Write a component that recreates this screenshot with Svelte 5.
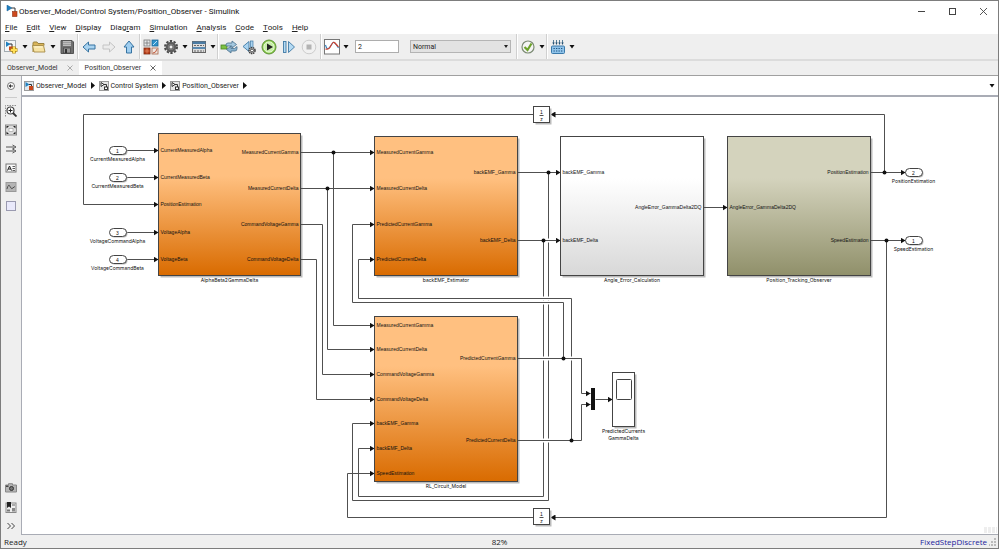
<script lang="ts">
  type Port = { y: number; name: string };
  type Block = {
    name: string;
    x: number;
    y: number;
    w: number;
    h: number;
    fill: string;
    inputs: Port[];
    outputs: Port[];
  };

  const menus = [
    ["", "F", "ile"],
    ["", "E", "dit"],
    ["", "V", "iew"],
    ["", "D", "isplay"],
    ["Diag", "r", "am"],
    ["", "S", "imulation"],
    ["", "A", "nalysis"],
    ["", "C", "ode"],
    ["", "T", "ools"],
    ["", "H", "elp"],
  ];

  const tabs = ["Observer_Model", "Position_Observer"];
  const crumbs = ["Observer_Model", "Control System", "Position_Observer"];
  const modes = ["Normal", "Accelerator", "Rapid Accelerator", "External"];

  let activeTab = $state("Position_Observer");
  let stopTime = $state("2");
  let mode = $state("Normal");

  const blocks: Block[] = [
    {
      name: "AlphaBeta2GammaDelta",
      x: 158,
      y: 133,
      w: 142,
      h: 142,
      fill: "orange",
      inputs: [
        { y: 150, name: "CurrentMeasuredAlpha" },
        { y: 177, name: "CurrentMeasuredBeta" },
        { y: 204, name: "PositionEstimation" },
        { y: 232, name: "VoltageAlpha" },
        { y: 259, name: "VoltageBeta" },
      ],
      outputs: [
        { y: 152, name: "MeasuredCurrentGamma" },
        { y: 188, name: "MeasuredCurrentDelta" },
        { y: 224, name: "CommandVoltageGamma" },
        { y: 259, name: "CommandVoltageDelta" },
      ],
    },
    {
      name: "backEMF_Estimator",
      x: 374,
      y: 136,
      w: 143,
      h: 139,
      fill: "orange",
      inputs: [
        { y: 152, name: "MeasuredCurrentGamma" },
        { y: 188, name: "MeasuredCurrentDelta" },
        { y: 224, name: "PredictedCurrentGamma" },
        { y: 259, name: "PredictedCurrentDelta" },
      ],
      outputs: [
        { y: 172, name: "backEMF_Gamma" },
        { y: 240, name: "backEMF_Delta" },
      ],
    },
    {
      name: "Angle_Error_Calculation",
      x: 560,
      y: 136,
      w: 143,
      h: 139,
      fill: "white",
      inputs: [
        { y: 172, name: "backEMF_Gamma" },
        { y: 240, name: "backEMF_Delta" },
      ],
      outputs: [{ y: 207, name: "AngleError_GammaDelta2DQ" }],
    },
    {
      name: "Position_Tracking_Observer",
      x: 727,
      y: 136,
      w: 143,
      h: 139,
      fill: "olive",
      inputs: [{ y: 207, name: "AngleError_GammaDelta2DQ" }],
      outputs: [
        { y: 172, name: "PositionEstimation" },
        { y: 240, name: "SpeedEstimation" },
      ],
    },
    {
      name: "RL_Circuit_Model",
      x: 374,
      y: 316,
      w: 143,
      h: 165,
      fill: "orange",
      inputs: [
        { y: 325, name: "MeasuredCurrentGamma" },
        { y: 349, name: "MeasuredCurrentDelta" },
        { y: 374, name: "CommandVoltageGamma" },
        { y: 399, name: "CommandVoltageDelta" },
        { y: 423, name: "backEMF_Gamma" },
        { y: 448, name: "backEMF_Delta" },
        { y: 473, name: "SpeedEstimation" },
      ],
      outputs: [
        { y: 358, name: "PredictedCurrentGamma" },
        { y: 440, name: "PredictedCurrentDelta" },
      ],
    },
  ];

  const terminals = [
    { id: 1, x: 117, y: 150, name: "CurrentMeasuredAlpha" },
    { id: 2, x: 117, y: 177, name: "CurrentMeasuredBeta" },
    { id: 3, x: 117, y: 232, name: "VoltageCommandAlpha" },
    { id: 4, x: 117, y: 259, name: "VoltageCommandBeta" },
    { id: 2, x: 913, y: 172, name: "PositionEstimation" },
    { id: 1, x: 913, y: 240, name: "SpeedEstimation" },
  ];

  const delays = [
    { x: 533, y: 106 },
    { x: 533, y: 508 },
  ];

  const wires = [
    "M126 150H158",
    "M126 177H158",
    "M126 232H158",
    "M126 259H158",
    "M333 152V325H374",
    "M327 188V349H374",
    "M300 152H374",
    "M300 188H374",
    "M300 224H322V374H374",
    "M300 259H316V399H374",
    "M548 172V500H352V423H374",
    "M543 240V496H358V448H374",
    "M517 172H560",
    "M517 240H560",
    "M703 207H727",
    "M870 172H905",
    "M870 240H905",
    "M884 172V114H550",
    "M886 240V517H550",
    "M347 517V473H374",
    "M533 114H83V204H158",
  ];
  const predicted = [
    "M563 358V302H352V224H374",
    "M571 440V298H358V259H374",
    "M517 358H581V393H590",
    "M517 440H581V404H590",
    "M595 399H612",
  ];
  const plain = ["M533 517H347"];

  const gaps = [
    [548, 240],
    [548, 298],
    [543, 298],
    [548, 302],
    [543, 302],
    [548, 358],
    [543, 358],
    [571, 358],
    [548, 440],
    [543, 440],
  ];

  const joints = [
    [333, 152],
    [327, 188],
    [548, 172],
    [543, 240],
    [563, 358],
    [571, 440],
    [884, 172],
    [886, 240],
  ];
</script>

{#snippet caret(label: string)}
  <button class="caret" aria-label={label}>
    <svg width="6" height="4" viewBox="0 0 6 4"><path d="M.5 0h5L3 3.500z" fill="#111" /></svg>
  </button>
{/snippet}

{#snippet modelIcon(color: boolean)}
  <svg class="model-icon" width="10" height="10" viewBox="0 0 10 10">
    <rect x=".5" y=".5" width="9" height="9" fill={color ? "#dfe8ee" : "#e6e6e6"} stroke="#9b9b9b" />
    {#if color}
      <path d="M1.500 1 5.500 3.500 1.500 6z" fill="#1f7fc0" />
      <path d="M5 3.500h2.500V6" fill="none" stroke="#333" />
      <rect x="5" y="5" width="4" height="4" fill="#c9471b" />
    {:else}
      <path d="M2 1.500 5 3.500 2 5.500z" fill="#fff" stroke="#222" stroke-width=".9" />
      <path d="M5 3.500h2.500V6" fill="none" stroke="#222" stroke-width=".9" />
      <rect x="5.500" y="6" width="3" height="2.500" fill="#fff" stroke="#222" stroke-width=".9" />
    {/if}
  </svg>
{/snippet}

<svelte:head>
  <title>Simulink</title>
</svelte:head>

<div class="window">
  <header class="titlebar">
    <svg width="12" height="12" viewBox="0 0 12 12">
      <path d="M1 0 6 3 1 6z" fill="#1f7fc0" stroke="#155f94" stroke-width=".5" />
      <path d="M5.500 3H9v4" fill="none" stroke="#333" />
      <rect x="6.500" y="6.500" width="4.500" height="5" fill="#cf4a1d" stroke="#923010" stroke-width=".6" />
    </svg>
    <h1>Observer_Model/Control System/Position_Observer - Simulink</h1>
    <div class="window-buttons">
      <button aria-label="Minimize">
        <svg width="9" height="9" viewBox="0 0 9 9"><path d="M1 4.500h7" stroke="#444" /></svg>
      </button>
      <button aria-label="Maximize">
        <svg width="9" height="9" viewBox="0 0 9 9"><rect x="1.500" y="1.500" width="6" height="6" fill="none" stroke="#444" /></svg>
      </button>
      <button aria-label="Close">
        <svg width="9" height="9" viewBox="0 0 9 9"><path d="M1 1l7 7M8 1 1 8" stroke="#444" stroke-width=".9" /></svg>
      </button>
    </div>
  </header>

  <nav class="menubar">
    {#each menus as [before, key, after]}
      <button>{before}<u>{key}</u>{after}</button>
    {/each}
  </nav>

  <div class="toolbar">
    <button class="tool" aria-label="New model">
      <svg width="16" height="16" viewBox="0 0 16 16">
        <rect x="1.500" y="1.500" width="11" height="11" fill="#f4f7f8" stroke="#a3abb0" />
        <path d="M3 2.500 7.500 5 3 8z" fill="#1f7fc0" />
        <path d="M6.500 5H9v3" fill="none" stroke="#333" />
        <rect x="6" y="7.500" width="4" height="4" fill="#c9471b" />
        <path d="M11 7.500v7M7.500 11h7" stroke="#b08a1a" stroke-width="3.600" />
        <path d="M11 8v6M8 11h6" stroke="#ffdf56" stroke-width="2" />
      </svg>
    </button>
    {@render caret("New options")}
    <button class="tool" aria-label="Open">
      <svg width="16" height="16" viewBox="0 0 16 16">
        <path d="M2 13V4q0-1 1-1h3l1 1.500h6v2" fill="#d9b458" stroke="#9b8340" />
        <path d="M1.500 6.500h11l1.500 6.500H3z" fill="#f7e3a4" stroke="#a58b47" stroke-width=".9" />
        <path d="M3.500 8h8" stroke="#fff6d6" />
      </svg>
    </button>
    {@render caret("Open options")}
    <button class="tool" aria-label="Save">
      <svg width="16" height="16" viewBox="0 0 16 16">
        <path d="M2 1.500h11l1.500 1.500v11.500H2z" fill="#707070" stroke="#555" />
        <rect x="4" y="2" width="8" height="5" fill="#bdbdbd" />
        <path d="M4 3.500h8M4 5.500h8" stroke="#909090" stroke-width=".7" />
        <rect x="4.500" y="9" width="7" height="5" fill="#999" stroke="#444" stroke-width=".7" />
        <rect x="6" y="10" width="2" height="4" fill="#333" />
      </svg>
    </button>
    <span class="sep"></span>
    <button class="tool" aria-label="Back">
      <svg width="16" height="16" viewBox="0 0 16 16">
        <path d="M2 8 7.500 3v3H14v4H7.500v3z" fill="#a9d3f0" stroke="#3673a1" />
      </svg>
    </button>
    <button class="tool" aria-label="Forward">
      <svg width="16" height="16" viewBox="0 0 16 16">
        <path d="M14 8 8.500 3v3H2v4h6.500v3z" fill="#ececec" stroke="#c4c4c4" />
      </svg>
    </button>
    <button class="tool" aria-label="Up to parent">
      <svg width="16" height="16" viewBox="0 0 16 16">
        <path d="M8 2 13 8h-2.500v6h-5V8H3z" fill="#9fcef0" stroke="#3673a1" />
      </svg>
    </button>
    <span class="sep"></span>
    <button class="tool" aria-label="Library browser">
      <svg width="16" height="16" viewBox="0 0 16 16">
        <rect x="1" y="1" width="6" height="6" fill="#e6e9eb" stroke="#777" stroke-width=".8" />
        <path d="M1.500 4h5M4 1.500v5" stroke="#6b6b6b" stroke-width=".7" />
        <rect x="9" y="1" width="6" height="6" fill="#2f93cc" stroke="#1e6796" stroke-width=".8" />
        <path d="M10 6 14 2" stroke="#bce2f7" />
        <rect x="1" y="9" width="6" height="6" fill="#bb401b" stroke="#7e2a10" stroke-width=".8" />
        <path d="M1.500 12h5M4 9.500v5" stroke="#e5926f" stroke-width=".7" />
        <rect x="9" y="9" width="6" height="6" fill="#f1e8e3" stroke="#a5644a" stroke-width=".8" />
        <path d="M10 14q3 0 4-4" fill="none" stroke="#c0583a" />
      </svg>
    </button>
    <button class="tool" aria-label="Model configuration">
      <svg width="16" height="16" viewBox="0 0 16 16">
        <circle cx="8" cy="8" r="6" fill="none" stroke="#494949" stroke-width="2" stroke-dasharray="2.300 1.470" />
        <circle cx="8" cy="8" r="4" fill="#aaa" stroke="#5d5d5d" stroke-width="2.600" />
        <circle cx="8" cy="8" r="2" fill="#eee" stroke="#333" stroke-width=".7" />
      </svg>
    </button>
    {@render caret("Configuration options")}
    <button class="tool" aria-label="Model explorer">
      <svg width="16" height="16" viewBox="0 0 16 16">
        <rect x="1.500" y="2.500" width="13" height="11" fill="#dcdcdc" stroke="#666" />
        <rect x="1.500" y="2.500" width="13" height="2.500" fill="#4a7ba3" />
        <rect x="1.500" y="8" width="13" height="2" fill="#5b8ab0" />
        <path d="M3 6.500h10M3 12h10" stroke="#666" stroke-dasharray="2 1" />
      </svg>
    </button>
    {@render caret("Explorer options")}
    <span class="sep"></span>
    <button class="tool" aria-label="Fast restart">
      <svg width="18" height="16" viewBox="0 0 18 16">
        <rect x="1" y="6" width="6" height="4" fill="#7cc142" stroke="#4b8424" stroke-width=".8" />
        <path d="M6 6q0-2 2-2h4V2l4.500 3.500L12 9V7H6z" fill="#a5c8df" stroke="#47708d" stroke-width=".8" />
        <path d="M17 7.500v2q0 2.500-2 2.500h-4v2l-4.500-3.500L11 7v2.500h3.500z" fill="#8ab3cf" stroke="#47708d" stroke-width=".8" />
      </svg>
    </button>
    <button class="tool" aria-label="Step back">
      <svg width="16" height="16" viewBox="0 0 16 16">
        <path d="M8 2.500v10L2 7.500z" fill="#a9d3f0" stroke="#3f79a5" stroke-width=".9" />
        <rect x="9.500" y="2" width="2.500" height="9" fill="#a9d3f0" stroke="#3f79a5" stroke-width=".7" />
        <circle cx="11" cy="11.500" r="3" fill="#ddd" stroke="#3e3e3e" stroke-width="1.500" stroke-dasharray="1.500 .6" />
        <circle cx="11" cy="11.500" r="1.500" fill="#fff" stroke="#444" />
      </svg>
    </button>
    <button class="tool" aria-label="Run">
      <svg width="16" height="16" viewBox="0 0 16 16">
        <circle cx="8" cy="8" r="7" fill="#8bcf4c" stroke="#5d8f38" />
        <circle cx="8" cy="8" r="5.200" fill="#c9eeaa" stroke="#f0fbe6" stroke-width=".8" />
        <path d="M6 4.500 12 8 6 11.500z" fill="#222" />
      </svg>
    </button>
    <button class="tool" aria-label="Step forward">
      <svg width="16" height="16" viewBox="0 0 16 16">
        <rect x="2.500" y="2.500" width="2.500" height="11" fill="#b4daf3" stroke="#3f79a5" stroke-width=".9" />
        <path d="M7.500 2.500 13.500 8l-6 5.500z" fill="#b4daf3" stroke="#3f79a5" stroke-width=".9" />
      </svg>
    </button>
    <button class="tool" aria-label="Stop">
      <svg width="16" height="16" viewBox="0 0 16 16">
        <circle cx="8" cy="8" r="6.800" fill="#f1f1f1" stroke="#ccc" />
        <rect x="5.500" y="5.500" width="5" height="5" fill="#b3b3b3" />
      </svg>
    </button>
    <span class="sep wide"></span>
    <button class="tool" aria-label="Data inspector">
      <svg width="16" height="16" viewBox="0 0 16 16">
        <rect x=".5" y=".5" width="15" height="14.500" fill="#fff" stroke="#777" />
        <path d="M1.500 6q1.500 6 4 2.500t3.500-5 5.500 5.500" fill="none" stroke="#2c7fc0" stroke-width="1.100" />
        <path d="M1.500 10q3.500 1 5.500-3.500t4-2.500 3.500 4" fill="none" stroke="#d4422c" stroke-width="1.100" />
      </svg>
    </button>
    {@render caret("Inspector options")}
    <input class="stop-time" aria-label="Simulation stop time" bind:value={stopTime} />
    <div class="mode">
      <select aria-label="Simulation mode" bind:value={mode}>
        {#each modes as m}
          <option>{m}</option>
        {/each}
      </select>
    </div>
    <span class="sep"></span>
    <button class="tool" aria-label="Model advisor">
      <svg width="16" height="16" viewBox="0 0 16 16">
        <circle cx="8" cy="8" r="6" fill="#f5f5f5" stroke="#7c8b74" stroke-width="1.200" />
        <path d="M4.500 8 7.500 11 11.500 4.500" fill="none" stroke="#6da32b" stroke-width="2.200" />
      </svg>
    </button>
    {@render caret("Advisor options")}
    <span class="sep"></span>
    <button class="tool" aria-label="Build model">
      <svg width="16" height="16" viewBox="0 0 16 16">
        <path d="M3.500 1v4M6.500 1v4M9.500 1v4M12.500 1v4" stroke="#44708f" stroke-width=".9" />
        <path d="M2.300 3.500h2.400L3.500 6zM5.300 3.500h2.400L6.500 6zM8.300 3.500h2.400L9.500 6zM11.300 3.500h2.400L12.500 6z" fill="#234e70" />
        <rect x="1.500" y="7" width="13" height="7.500" rx="1" fill="#8fc3ea" stroke="#3a79aa" />
        <path d="M3.500 9.500h9M3.500 12h9" stroke="#1f5482" stroke-width="1.200" stroke-dasharray="1.300 1.200" />
      </svg>
    </button>
    {@render caret("Build options")}
  </div>

  <div class="tabs" role="tablist">
    {#each tabs as tab (tab)}
      <div class="tab" class:active={tab === activeTab}>
        <button role="tab" aria-selected={tab === activeTab} onclick={() => (activeTab = tab)}>{tab}</button>
        <button class="tab-close" aria-label="Close {tab}">
          <svg width="6" height="6" viewBox="0 0 6 6"><path d="M.5.5l5 5M5.500.5l-5 5" stroke="currentColor" /></svg>
        </button>
      </div>
    {/each}
  </div>

  <div class="workspace">
    <aside class="palette">
      <button aria-label="Hide browser">
        <svg width="10" height="10" viewBox="0 0 10 10">
          <circle cx="5" cy="5" r="3.500" fill="#fff" stroke="#777" />
          <path d="M7 5H4" stroke="#333" /><path d="M2.500 5 5 3v4z" fill="#333" />
        </svg>
      </button>
      <hr />
      <button aria-label="Zoom">
        <svg width="12" height="12" viewBox="0 0 12 12">
          <path d="M.5 11.500V.5h11" fill="none" stroke="#777" stroke-width=".8" stroke-dasharray="1.500 1" />
          <circle cx="5.500" cy="5.500" r="3.500" fill="#fff" stroke="#444" stroke-width="1.200" />
          <path d="M3.500 5.500h4M5.500 3.500v4" stroke="#222" />
          <path d="M8 8l3.500 3.500" stroke="#333" stroke-width="1.800" />
        </svg>
      </button>
      <button aria-label="Fit to view">
        <svg width="12" height="12" viewBox="0 0 12 12">
          <rect x=".5" y="1" width="11" height="10" fill="#ddd" stroke="#888" />
          <path d="M1.500 4.500V2H4zM10.500 4.500V2H8zM1.500 7.500V10H4zM10.500 7.500V10H8z" fill="#222" />
          <rect x="4" y="4.500" width="4" height="3" fill="#fff" stroke="#999" stroke-width=".6" />
        </svg>
      </button>
      <button aria-label="Sample time">
        <svg width="12" height="12" viewBox="0 0 12 12">
          <path d="M1 4h8M1 8h8" stroke="#444" stroke-width=".9" />
          <path d="M7.500 2 11 4 7.500 6M7.500 6 11 8 7.500 10" fill="none" stroke="#444" stroke-width=".9" />
        </svg>
      </button>
      <button aria-label="Annotation">
        <svg width="12" height="12" viewBox="0 0 12 12">
          <rect x="1" y="2" width="10" height="8" fill="#f8f8f8" stroke="#777" />
          <path d="M2.500 8.500 4.500 4l2 4.500M3.300 7h2.500" fill="none" stroke="#222" />
          <path d="M7.500 4.500h2.500M7.500 6.500h2.500M7.500 8.500h2.500" stroke="#333" stroke-width=".8" />
        </svg>
      </button>
      <button aria-label="Image">
        <svg width="12" height="12" viewBox="0 0 12 12">
          <rect x="1" y="1.500" width="10" height="9" fill="#b5b5b5" stroke="#999" />
          <path d="M2 8q1.500-6 3-2.500T8 7t2-1" fill="none" stroke="#444" stroke-width=".9" />
        </svg>
      </button>
      <button aria-label="Area">
        <svg width="12" height="12" viewBox="0 0 12 12"><rect x="1.500" y="1.500" width="9" height="9" fill="#e9e9fb" stroke="#9a9ab0" /></svg>
      </button>
      <span class="fill"></span>
      <button aria-label="Screenshot">
        <svg width="12" height="10" viewBox="0 0 12 10">
          <path d="M.5 2h3V.7h4V2h4v7H.5z" fill="#b5b5b5" stroke="#888" />
          <rect x="1" y="2.500" width="2.500" height="1.500" fill="#444" />
          <circle cx="6.500" cy="5.500" r="2" fill="#777" stroke="#333" />
        </svg>
      </button>
      <button aria-label="Model data">
        <svg width="12" height="12" viewBox="0 0 12 12">
          <rect x="1" y="2" width="10" height="9.500" fill="#eee" stroke="#888" />
          <path d="M2 1h4v6L4 5.500 2 7z" fill="#222" />
          <rect x="2" y="8.500" width="3" height="2" fill="#777" /><rect x="7" y="7" width="3" height="3.500" fill="#888" />
          <path d="M7 4h3" stroke="#666" />
        </svg>
      </button>
      <button aria-label="More">
        <svg width="10" height="8" viewBox="0 0 10 8"><path d="M1.500 1 4.500 4l-3 3M5.500 1l3 3-3 3" fill="none" stroke="#444" /></svg>
      </button>
    </aside>

    <main>
      <nav class="breadcrumb">
        {#each crumbs as crumb, i}
          <button>{@render modelIcon(i === 0)}{crumb}</button>
          <svg width="4" height="7" viewBox="0 0 4 7"><path d="M0 0v7l4-3.500z" fill="#111" /></svg>
        {/each}
        <span class="fill"></span>
        {@render caret("Navigation history")}
      </nav>

      <div class="canvas">
        <svg class="diagram" width="950" height="432" viewBox="21.5 96.5 950 432">
          <defs>
            <linearGradient id="orange" x1="0" y1="0" x2="0" y2="1">
              <stop offset=".3" stop-color="#ffc080" />
              <stop offset="1" stop-color="#d96b00" />
            </linearGradient>
            <linearGradient id="white" x1="0" y1="0" x2="0" y2="1">
              <stop offset=".3" stop-color="#ffffff" />
              <stop offset="1" stop-color="#d8d8d8" />
            </linearGradient>
            <linearGradient id="olive" x1="0" y1="0" x2="0" y2="1">
              <stop offset=".3" stop-color="#d4d3bd" />
              <stop offset="1" stop-color="#90906a" />
            </linearGradient>
            <marker id="head" markerUnits="userSpaceOnUse" markerWidth="6" markerHeight="6" refX="5" refY="3" orient="auto">
              <path d="M0 0 5 3 0 6z" fill="#111" />
            </marker>
          </defs>

          {#each blocks as b (b.name)}
            <rect class="shadow" x={b.x + 2} y={b.y + 2} width={b.w} height={b.h} />
          {/each}

          {#each wires as d}
            <path class="wire" {d} marker-end="url(#head)" />
          {/each}
          {#each gaps as [x, y]}
            <path class="gap" d="M{x} {y - 2}V{y + 2}" />
          {/each}
          <path class="wire" d="M517 240H556" />
          {#each predicted as d}
            <path class="wire" {d} marker-end="url(#head)" />
          {/each}
          <path class="gap" d="M571 356V360" />
          <path class="wire" d="M517 358H581" />
          {#each plain as d}
            <path class="wire" {d} />
          {/each}
          {#each joints as [x, y]}
            <circle cx={x} cy={y} r="2" fill="#111" />
          {/each}

          {#each blocks as b (b.name)}
            <rect class="block" x={b.x} y={b.y} width={b.w} height={b.h} fill="url(#{b.fill})" />
            {#each b.inputs as p}
              <text x={b.x + 2} y={p.y + 1}>{p.name}</text>
            {/each}
            {#each b.outputs as p}
              <text class="end" x={b.x + b.w - 2} y={p.y + 1}>{p.name}</text>
            {/each}
            <text class="mid label" x={b.x + b.w / 2} y={b.y + b.h + 6}>{b.name}</text>
          {/each}

          {#each terminals as t}
            <rect class="shadow" x={t.x - 7} y={t.y - 3} width="17" height="8" rx="4" />
            <rect class="block" x={t.x - 8} y={t.y - 4} width="17" height="8" rx="4" fill="#fff" />
            <text class="mid" x={t.x} y={t.y + 2}>{t.id}</text>
            <text class="mid label" x={t.x} y={t.y + 10}>{t.name}</text>
          {/each}

          {#each delays as d}
            <rect class="shadow" x={d.x + 2} y={d.y + 2} width="16" height="16" />
            <rect class="block" x={d.x} y={d.y} width="16" height="16" fill="#fff" />
            <text class="mid" x={d.x + 8} y={d.y + 7}>1</text>
            <path class="wire" d="M{d.x + 6} {d.y + 9}H{d.x + 10}" />
            <text class="mid" x={d.x + 8} y={d.y + 14}>z</text>
          {/each}

          <rect x="591" y="388" width="3" height="21" fill="#111" stroke="#111" />
          <rect class="shadow" x="614" y="374" width="22" height="54" />
          <rect class="block" x="612" y="372" width="22" height="54" fill="#fff" />
          <rect class="block" x="616" y="379" width="15" height="20" rx="1" fill="#fff" />
          <text class="mid label" x="623" y="432">PredictedCurrents</text>
          <text class="mid label" x="623" y="439">GammaDelta</text>
        </svg>
        <span class="corner"></span>
      </div>
    </main>
  </div>

  <footer class="statusbar">
    <span>Ready</span>
    <span class="zoom">82%</span>
    <a href="#solver">FixedStepDiscrete</a>
    <svg width="7" height="8" viewBox="0 0 7 8">
      <path d="M5 0h2v2H5zM5 3h2v2H5zM5 6h2v2H5zM2 3h2v2H2zM2 6h2v2H2zM-1 6h2v2h-2z" fill="#bbb" />
    </svg>
  </footer>
</div>

<style>
  :global(body) {
    margin: 0;
  }
  .window {
    box-sizing: border-box;
    display: flex;
    flex-direction: column;
    min-height: 100vh;
    border: 1px solid #7d7d7d;
    background: #fff;
    color: #222;
    font-family: Roboto, "Open Sans", sans-serif;
    font-size: 8px;
  }
  button {
    display: flex;
    align-items: center;
    justify-content: center;
    padding: 0;
    border: none;
    background: none;
    color: inherit;
    font: inherit;
    white-space: nowrap;
  }
  svg {
    display: block;
    flex-shrink: 0;
  }
  .titlebar {
    display: flex;
    align-items: center;
    gap: 1px;
    height: 20px;
    padding: 0 7px 0 5px;
  }
  h1 {
    flex: 1;
    margin: 0;
    font-size: 8px;
    font-weight: 400;
    color: #111;
  }
  .window-buttons {
    display: flex;
    gap: 22px;
    padding-right: 3px;
  }
  .menubar {
    display: flex;
    gap: 9px;
    height: 13px;
    padding-left: 4px;
  }
  .toolbar {
    display: flex;
    align-items: center;
    height: 25px;
    border-bottom: 2px solid #dcdcdc;
    background: #efefef;
  }
  .tool {
    width: 20px;
    height: 20px;
  }
  .caret {
    width: 8px;
    height: 20px;
  }
  .sep {
    align-self: stretch;
    width: 1px;
    border-left: 1px solid #d0d0d0;
    background: #fff;
  }
  .sep.wide {
    margin-left: 1px;
  }
  .stop-time {
    box-sizing: border-box;
    width: 44px;
    height: 13px;
    margin: 0 11px 0 5px;
    padding: 0 2px;
    border: 1px solid #adadad;
    background: #fff;
    color: #222;
    font-family: inherit;
    font-size: 7px;
  }
  .mode {
    position: relative;
    margin-right: 5px;
  }
  .mode::after {
    content: "";
    position: absolute;
    top: 5px;
    right: 3px;
    border: 2px solid transparent;
    border-top: 3px solid #222;
    pointer-events: none;
  }
  select {
    display: block;
    appearance: none;
    width: 101px;
    height: 13px;
    padding: 0 2px;
    border: 1px solid #b4b4b4;
    border-radius: 0;
    background: #e2e2e2;
    color: #222;
    font-family: inherit;
    font-size: 7px;
  }
  .tabs {
    display: flex;
    height: 14px;
    border-bottom: 1px solid #a0a0a0;
    background: #efefef;
    font-size: 7px;
  }
  .tab {
    display: flex;
    align-items: center;
    gap: 9px;
    padding: 0 6px;
    color: #333;
  }
  .tab.active {
    background: #fff;
  }
  .tab-close {
    color: #aaa;
  }
  .active .tab-close {
    color: #666;
  }
  .workspace {
    display: flex;
    flex: 1;
  }
  .palette {
    display: flex;
    flex-direction: column;
    width: 20px;
    border-right: 1px solid #a9acb5;
    background: #efefef;
  }
  .palette button {
    height: 19px;
  }
  .palette hr {
    width: 12px;
    margin: 2px auto 3px;
    border: none;
    border-top: 1px solid #ccc;
  }
  .fill {
    flex: 1;
  }
  main {
    display: flex;
    flex: 1;
    flex-direction: column;
    min-width: 0;
  }
  .breadcrumb {
    display: flex;
    align-items: center;
    gap: 4px;
    height: 19px;
    padding: 0 2px;
    border-bottom: 2px solid #a9acb5;
    font-size: 7px;
  }
  .breadcrumb button {
    gap: 2px;
  }
  .canvas {
    position: relative;
    flex: 1;
    overflow: hidden;
    border-bottom: 1px solid #a9acb5;
  }
  .corner {
    position: absolute;
    right: 1px;
    bottom: 1px;
    width: 13px;
    height: 6px;
    background: repeating-linear-gradient(90deg, #eee 0 3px, #fff 3px 4px);
  }
  .diagram text {
    fill: #111;
    font-family: "Liberation Sans", Arial, sans-serif;
    font-size: 5px;
  }
  .diagram .label {
    font-family: Inter, "Liberation Sans", sans-serif;
  }
  .diagram .end {
    text-anchor: end;
  }
  .diagram .mid {
    text-anchor: middle;
  }
  .wire {
    fill: none;
    stroke: #505050;
    stroke-width: 1px;
  }
  .gap {
    stroke: #fff;
    stroke-width: 3px;
  }
  .block {
    stroke: #444;
    stroke-width: 1px;
  }
  .shadow {
    fill: #bbb;
  }
  .statusbar {
    display: flex;
    align-items: center;
    height: 13px;
    padding: 0 2px 0 3px;
    background: #efefef;
    font-family: "Open Sans", sans-serif;
  }
  .statusbar span,
  .statusbar a {
    flex: 1;
  }
  .statusbar .zoom {
    flex: none;
    padding-left: 8px;
  }
  .statusbar a {
    padding-right: 2px;
    color: #1c1c9c;
    text-align: right;
    text-decoration: none;
  }
</style>
